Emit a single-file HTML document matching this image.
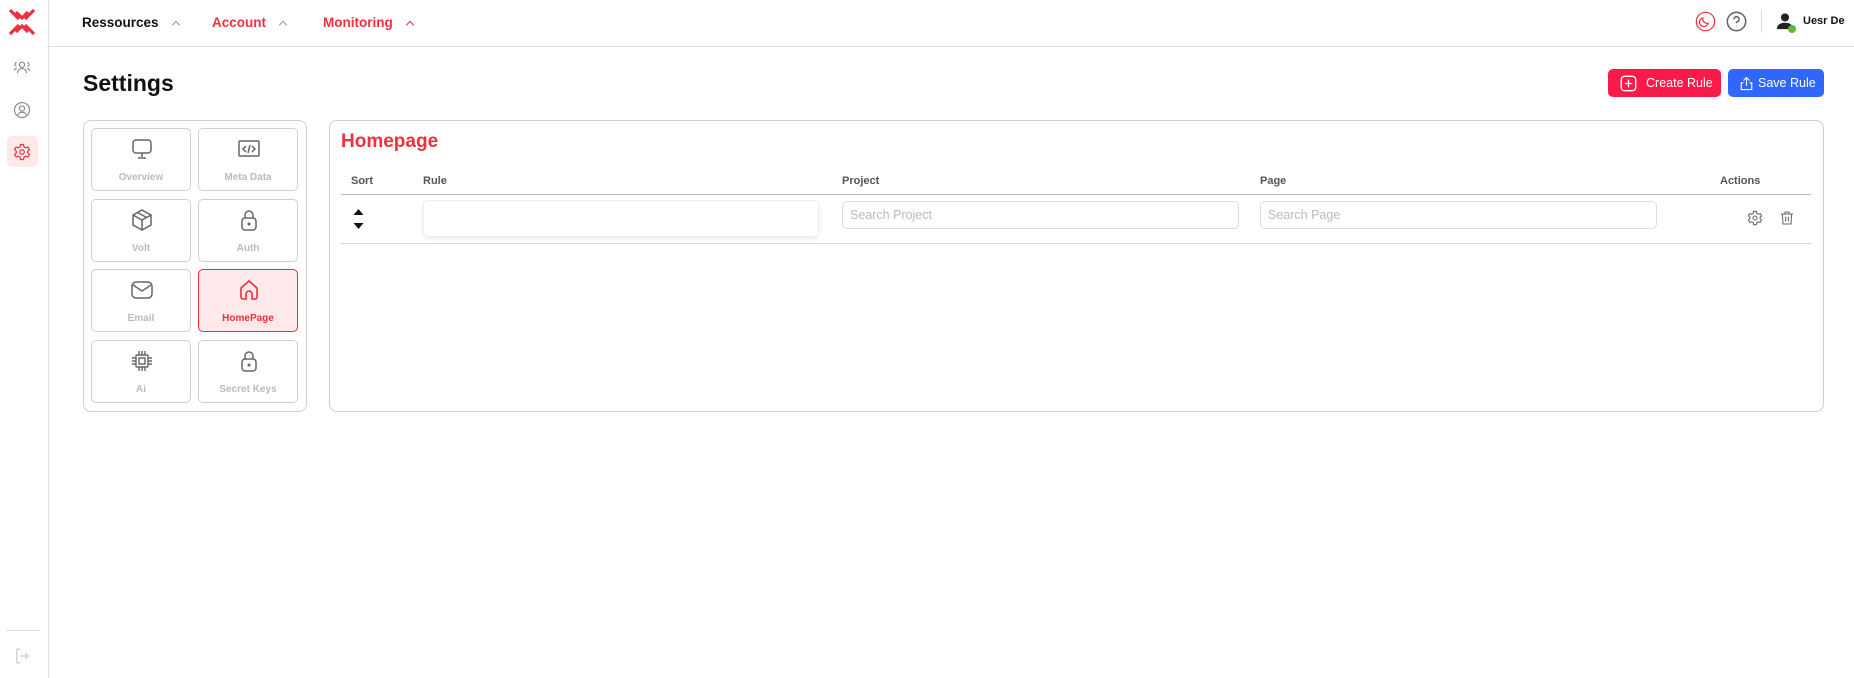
<!DOCTYPE html>
<html><head><meta charset="utf-8"><style>
*{box-sizing:border-box;margin:0;padding:0}
body{width:1854px;height:678px;background:#fff;font-family:"Liberation Sans",sans-serif;position:relative;overflow:hidden;color:#111}
.a{position:absolute}
.side{left:0;top:0;width:49px;height:678px;border-right:1px solid #e0e0e0}
.top{left:49px;top:0;right:0;height:47px;border-bottom:1.5px solid #e2e2e2}
.nav{top:15px;font-size:13.5px;font-weight:bold}
.chev{display:inline-block;width:6px;height:6px;border-left:1.5px solid #999;border-top:1.5px solid #999;transform:rotate(45deg);margin-left:14px;position:relative;top:1px}
.tile{position:absolute;width:100px;height:63px;border:1px solid #cfcfcf;border-radius:5px;text-align:center;font-size:10px;color:#bbb;font-weight:bold}
.tile svg{position:absolute;left:38px;top:8px}
.tile span{position:absolute;left:0;right:0;top:43px}
.th{top:175px;font-size:11px;font-weight:bold;color:#555}
.inp{height:28px;border:1px solid #ddd;border-radius:5px;font-size:12.5px;color:#bbb;padding:6px 7px}
.btn{top:69px;height:28px;border-radius:5px;color:#fff;font-size:12.5px;padding:7px 0 0 38px}
</style></head><body>
<div class="a side"></div>
<svg class="a" style="left:8px;top:8px" width="28" height="28" viewBox="0 0 28 28" fill="none" stroke="#f0303e" stroke-width="3.2"><path d="M2 2l9 9M26 2l-9 9M2 26l9-9M26 26l-9-9M8 4l6 6 6-6M8 24l6-6 6 6"/></svg>
<svg class="a" style="left:13px;top:58px" width="18" height="18" viewBox="0 0 24 24" fill="none" stroke="#888" stroke-width="1.5"><circle cx="12" cy="9" r="3.5"/><path d="M6 20c0-4 3-6 6-6s6 2 6 6M5 6a2.5 2.5 0 1 0 0 5M19 6a2.5 2.5 0 1 1 0 5M2 17c0-2 1-3 3-3M22 17c0-2-1-3-3-3"/></svg>
<svg class="a" style="left:13px;top:101px" width="18" height="18" viewBox="0 0 24 24" fill="none" stroke="#888" stroke-width="1.5"><circle cx="12" cy="12" r="10"/><circle cx="12" cy="10" r="3.5"/><path d="M6 19c1-3 3-4 6-4s5 1 6 4"/></svg>
<div class="a" style="left:7px;top:136px;width:31px;height:31px;background:#fde8ea;border-radius:5px"></div>
<svg class="a" style="left:13px;top:143px" width="18" height="18" viewBox="0 0 24 24" fill="none" stroke="#f0303e" stroke-width="1.6"><circle cx="12" cy="12" r="3"/><path d="M10 2h4l.6 3 2.4 1.4 2.9-1 2 3.4-2.3 2v2.4l2.3 2-2 3.4-2.9-1L14.6 19l-.6 3h-4l-.6-3L7 17.6l-2.9 1-2-3.4 2.3-2v-2.4l-2.3-2 2-3.4 2.9 1L9.4 5z"/></svg>
<div class="a" style="left:6px;top:630px;width:33px;border-top:1px solid #ddd"></div>
<svg class="a" style="left:13px;top:647px" width="18" height="18" viewBox="0 0 24 24" fill="none" stroke="#ccc" stroke-width="1.6"><path d="M9 3H5v18h4M10 12h10M16 8l4 4-4 4"/></svg>
<div class="a top"></div>
<div class="a nav" style="left:82px">Ressources<span class="chev"></span></div>
<div class="a nav" style="left:212px;color:#f0303e">Account<span class="chev"></span></div>
<div class="a nav" style="left:323px;color:#f0303e">Monitoring<span class="chev" style="border-color:#f0303e"></span></div>
<svg class="a" style="left:1695px;top:11px" width="21" height="21" viewBox="0 0 24 24" fill="none" stroke="#f0303e" stroke-width="1.4"><circle cx="12" cy="12" r="10.5"/><path d="M15 14a5 5 0 0 1-6-6 5 5 0 1 0 6 6z"/></svg>
<svg class="a" style="left:1726px;top:11px" width="21" height="21" viewBox="0 0 24 24" fill="none" stroke="#666" stroke-width="1.8"><circle cx="12" cy="12" r="10.5"/><path d="M9 9.5a3 3 0 1 1 4 2.8c-.7.3-1 .8-1 1.7M12 17v.5"/></svg>
<div class="a" style="left:1761px;top:10px;height:23px;border-left:1px solid #ddd"></div>
<svg class="a" style="left:1776px;top:12px" width="18" height="18" viewBox="0 0 20 20"><circle cx="10" cy="6" r="4.5" fill="#222"/><path d="M1 19c0-5 4-7 9-7s9 2 9 7z" fill="#222"/></svg>
<div class="a" style="left:1788px;top:25px;width:8px;height:8px;border-radius:50%;background:#5cb82e"></div>
<div class="a" style="left:1803px;top:15px;font-size:11px;font-weight:bold">Uesr De</div>
<div class="a" style="left:83px;top:70px;font-size:23px;font-weight:bold">Settings</div>
<div class="a btn" style="left:1608px;width:113px;background:#fb1a4a">Create Rule</div>
<svg class="a" style="left:1620px;top:75px" width="17" height="17" viewBox="0 0 20 20" fill="none" stroke="#fff" stroke-width="1.6"><rect x="1.5" y="1.5" width="17" height="17" rx="4"/><path d="M10 5.5v9M5.5 10h9"/></svg>
<div class="a btn" style="left:1728px;width:96px;background:#2f66fb;padding-left:30px">Save Rule</div>
<svg class="a" style="left:1739px;top:76px" width="15" height="15" viewBox="0 0 20 20" fill="none" stroke="#fff" stroke-width="1.5"><path d="M10 13V2M6 6l4-4 4 4M6 9H3v9h14V9h-3"/></svg>
<div class="a" style="left:83px;top:120px;width:224px;height:292px;border:1.5px solid #cfcfcf;border-radius:8px"></div>
<div class="tile" style="left:91px;top:128px"><svg width="24" height="24" viewBox="0 0 24 24" fill="none" stroke="#666" stroke-width="1.5"><rect x="3" y="3" width="18" height="13" rx="3"/><path d="M12 16v4M8 21h8"/></svg><span>Overview</span></div>
<div class="tile" style="left:198px;top:128px"><svg width="24" height="24" viewBox="0 0 24 24" fill="none" stroke="#666" stroke-width="1.5"><rect x="2" y="4" width="20" height="15" rx="1"/><path d="M9 9l-3 3 3 3M15 9l3 3-3 3M13 8l-2 8"/></svg><span>Meta Data</span></div>
<div class="tile" style="left:91px;top:199px"><svg width="24" height="24" viewBox="0 0 24 24" fill="none" stroke="#666" stroke-width="1.5"><path d="M12 2l9 5v10l-9 5-9-5V7zM3 7l9 5 9-5M12 12v10M7.5 4.5l9 5"/></svg><span>Volt</span></div>
<div class="tile" style="left:198px;top:199px"><svg width="24" height="24" viewBox="0 0 24 24" fill="none" stroke="#666" stroke-width="1.5"><rect x="5" y="10" width="14" height="12" rx="3"/><path d="M8 10V7a4 4 0 0 1 8 0v3"/><circle cx="12" cy="16" r=".8" fill="#666"/></svg><span>Auth</span></div>
<div class="tile" style="left:91px;top:269px"><svg width="24" height="24" viewBox="0 0 24 24" fill="none" stroke="#666" stroke-width="1.5"><rect x="2" y="4" width="20" height="16" rx="4"/><path d="M3 7l9 6 9-6"/></svg><span>Email</span></div>
<div class="tile" style="left:198px;top:269px;background:#fde8ea;border-color:#f0303e;color:#f0303e"><svg width="24" height="24" viewBox="0 0 24 24" fill="none" stroke="#f0303e" stroke-width="1.6"><path d="M4 10l8-7 8 7v9a2 2 0 0 1-2 2h-3v-5a3 3 0 0 0-6 0v5H6a2 2 0 0 1-2-2z"/></svg><span>HomePage</span></div>
<div class="tile" style="left:91px;top:340px"><svg width="24" height="24" viewBox="0 0 24 24" fill="none" stroke="#666" stroke-width="1.4"><rect x="6" y="6" width="12" height="12" rx="1"/><rect x="9" y="9" width="6" height="6"/><path d="M9 2v4M12 2v4M15 2v4M9 18v4M12 18v4M15 18v4M2 9h4M2 12h4M2 15h4M18 9h4M18 12h4M18 15h4"/></svg><span>Ai</span></div>
<div class="tile" style="left:198px;top:340px"><svg width="24" height="24" viewBox="0 0 24 24" fill="none" stroke="#666" stroke-width="1.5"><rect x="5" y="10" width="14" height="12" rx="3"/><path d="M8 10V7a4 4 0 0 1 8 0v3"/><circle cx="12" cy="16" r=".8" fill="#666"/></svg><span>Secret Keys</span></div>
<div class="a" style="left:329px;top:120px;width:1495px;height:292px;border:1.5px solid #cfcfcf;border-radius:8px"></div>
<div class="a" style="left:341px;top:131px;font-size:19px;font-weight:bold;color:#f0303e">Homepage</div>
<div class="a th" style="left:351px">Sort</div>
<div class="a th" style="left:423px">Rule</div>
<div class="a th" style="left:842px">Project</div>
<div class="a th" style="left:1260px">Page</div>
<div class="a th" style="left:1720px">Actions</div>
<div class="a" style="left:341px;top:194px;width:1470px;border-top:1.5px solid #bbb"></div>
<div class="a" style="left:341px;top:243px;width:1470px;border-top:1px solid #ddd"></div>
<svg class="a" style="left:353px;top:208px" width="11" height="22" viewBox="0 0 11 22"><path d="M5.5 1l5 6h-10zM5.5 21l5-6h-10z" fill="#111"/></svg>
<div class="a inp" style="left:423px;top:200px;width:396px;height:37px;border-color:#eee;box-shadow:0 2px 4px rgba(0,0,0,.08)"></div>
<div class="a inp" style="left:842px;top:201px;width:397px">Search Project</div>
<div class="a inp" style="left:1260px;top:201px;width:397px">Search Page</div>
<svg class="a" style="left:1747px;top:210px" width="16" height="16" viewBox="0 0 24 24" fill="none" stroke="#666" stroke-width="1.6"><circle cx="12" cy="12" r="3"/><path d="M10 2h4l.6 3 2.4 1.4 2.9-1 2 3.4-2.3 2v2.4l2.3 2-2 3.4-2.9-1L14.6 19l-.6 3h-4l-.6-3L7 17.6l-2.9 1-2-3.4 2.3-2v-2.4l-2.3-2 2-3.4 2.9 1L9.4 5z"/></svg>
<svg class="a" style="left:1779px;top:210px" width="16" height="16" viewBox="0 0 24 24" fill="none" stroke="#666" stroke-width="1.6"><path d="M3 6h18M9 6V3h6v3M5 6l1 15h12l1-15M10 10v7M14 10v7"/></svg>
</body></html>
